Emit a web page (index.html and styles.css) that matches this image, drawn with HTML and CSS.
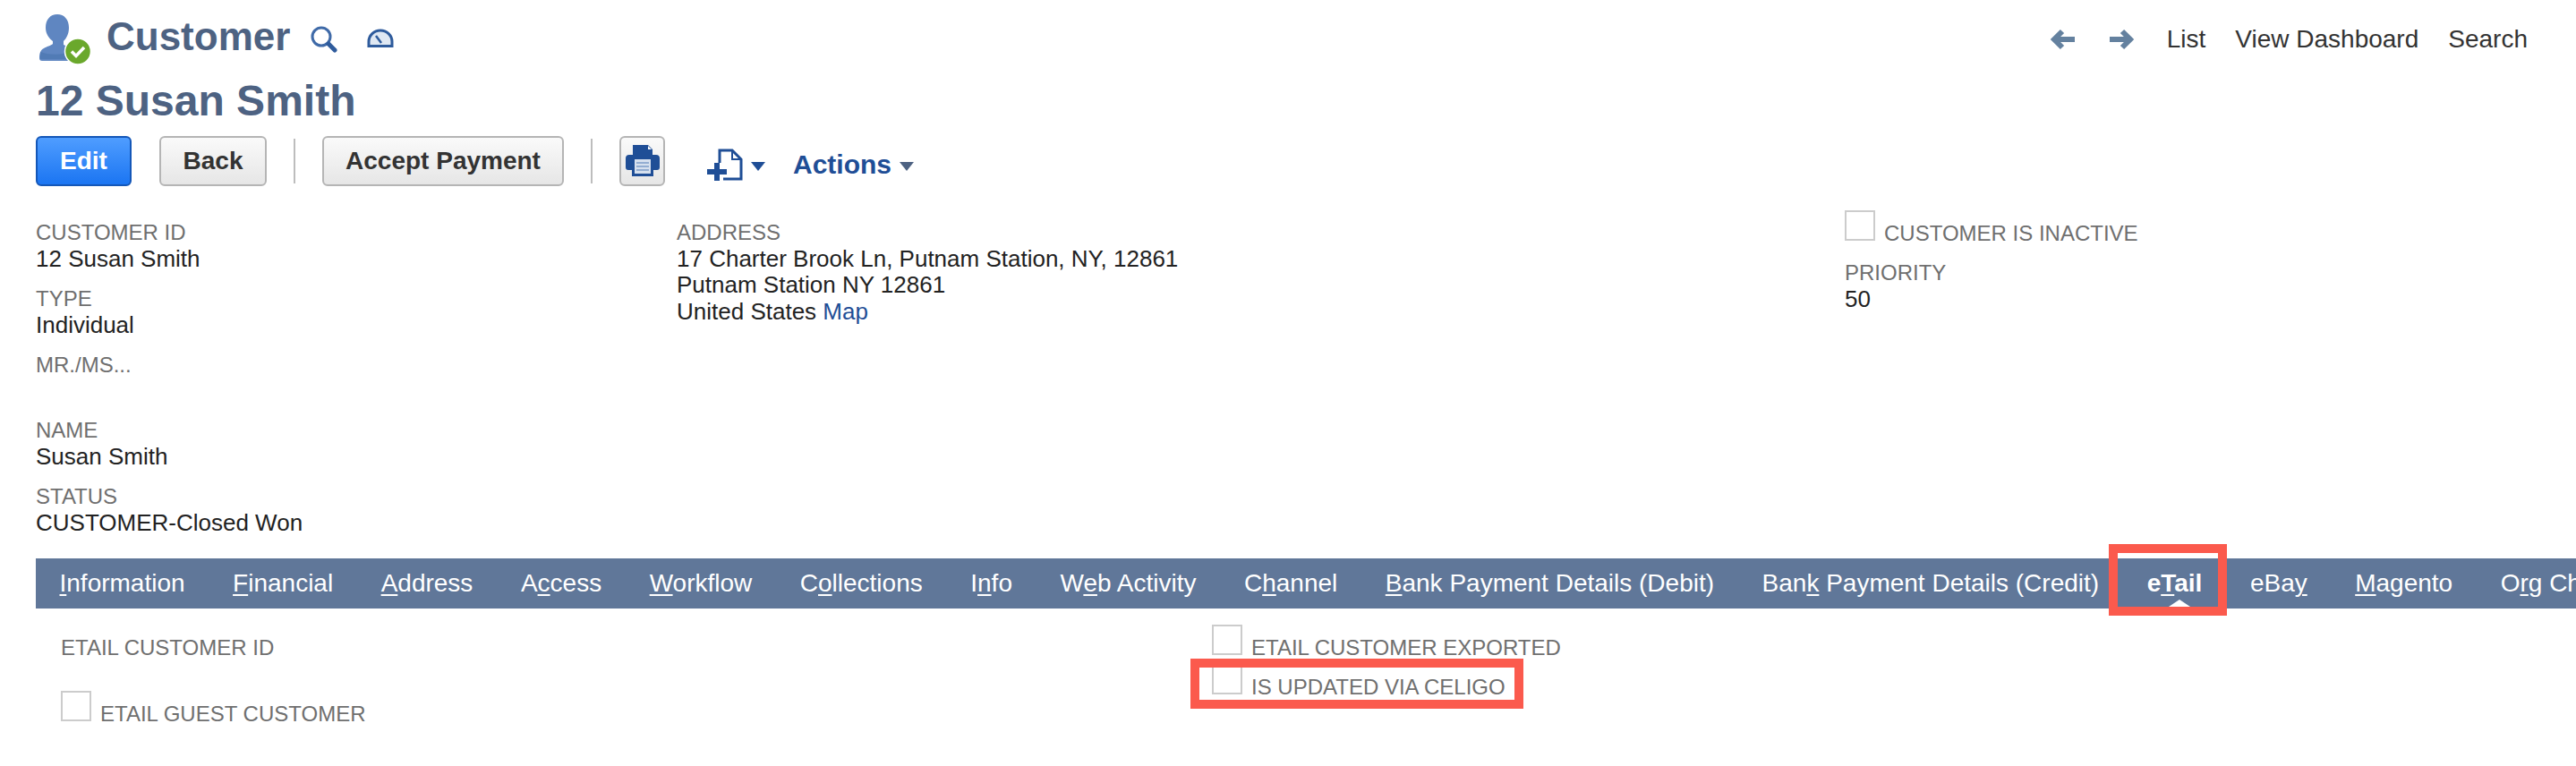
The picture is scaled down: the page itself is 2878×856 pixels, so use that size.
FILE: index.html
```html
<!DOCTYPE html>
<html lang="en">
<head>
<meta charset="utf-8">
<title>Customer - 12 Susan Smith</title>
<link rel="stylesheet" href="styles.css">
</head>
<body>
<div class="page">
  <header class="top">
    <div class="top-left">
      <svg class="person" viewBox="0 0 60 60" width="60" height="60" aria-hidden="true">
        <path d="M23 4c8 0 13 6 13 15 0 7-3 12-6 15v4c3 2 8 3 12 5 3 2 3 6 3 10v3H6c-2 0-3-1-3-3 0-5 1-9 5-11 3-2 8-3 10-5v-3c-4-3-8-8-8-15C10 10 15 4 23 4z" fill="#5f86c1"/>
        <path d="M4 46c8 3 24 5 38-2l3 10H4z" fill="#517bb5"/>
        <circle cx="46" cy="45.500" r="14.500" fill="#6aa82c" stroke="#fff" stroke-width="1.500"/>
        <path d="M39 45.500l5 5 9-9.500" fill="none" stroke="#fff" stroke-width="3.500"/>
      </svg>
      <span class="rec-type">Customer</span>
      <svg class="ico-search" viewBox="0 0 30 30" width="30" height="30" aria-hidden="true">
        <circle cx="12" cy="12" r="10" fill="none" stroke="#3f6aa8" stroke-width="3"/>
        <path d="M20 20l7 7" stroke="#2e5b9c" stroke-width="5" stroke-linecap="round"/>
      </svg>
      <svg class="ico-dash" viewBox="0 0 30 22" width="30" height="22" aria-hidden="true">
        <path d="M2 19.500v-5C2 7.500 8 2 15 2s13 5.500 13 12.500v5z" fill="#dfe8f3" stroke="#2e5b9c" stroke-width="3"/>
        <path d="M10 8l6 8" stroke="#2e5b9c" stroke-width="2.500"/>
      </svg>
    </div>
    <nav class="top-right">
      <svg class="arrow" viewBox="0 0 30 24" width="30" height="24" aria-hidden="true"><path d="M28 12H6M14 3l-9 9 9 9" fill="none" stroke="#64819f" stroke-width="6"/></svg>
      <svg class="arrow arrow-next" viewBox="0 0 30 24" width="30" height="24" aria-hidden="true"><path d="M2 12h22M16 3l9 9-9 9" fill="none" stroke="#64819f" stroke-width="6"/></svg>
      <a class="top-link top-link-list">List</a>
      <a class="top-link">View Dashboard</a>
      <a class="top-link">Search</a>
    </nav>
  </header>

  <h1 class="rec-name">12 Susan Smith</h1>

  <div class="actions">
    <button class="btn btn-primary">Edit</button>
    <button class="btn btn-back">Back</button>
    <span class="sep"></span>
    <button class="btn btn-accept">Accept Payment</button>
    <span class="sep"></span>
    <button class="btn btn-print" aria-label="Print">
      <svg viewBox="0 0 40 38" width="40" height="38" aria-hidden="true">
        <path d="M9 2h17l5 5v9H9z" fill="#1f4e96"/>
        <path d="M26 3l4 4h-4z" fill="#fff"/>
        <path d="M5 13h30a4 4 0 0 1 4 4v10a3 3 0 0 1-3 3h-4v7H8v-7H4a3 3 0 0 1-3-3V17a4 4 0 0 1 4-4z" fill="#1f4e96"/>
        <rect x="11" y="18" width="18" height="16" fill="#d6e0ee"/>
        <path d="M13 22h14M13 26h14M13 30h14" stroke="#7d9cc8" stroke-width="1.600"/>
      </svg>
    </button>
    <svg class="new-doc" viewBox="0 0 40 36" width="40" height="36" aria-hidden="true">
      <path d="M14 16V2h14l10 10v22H18" fill="none" stroke="#1f4e96" stroke-width="3"/>
      <path d="M28 2v10h10" fill="none" stroke="#1f4e96" stroke-width="2"/>
      <path d="M0 26h22M11 16v20" stroke="#1f4e96" stroke-width="6"/>
    </svg>
    <span class="caret caret-blue"></span>
    <a class="actions-menu">Actions</a>
    <span class="caret caret-slate"></span>
  </div>

  <section class="fields">
    <div class="col col-a">
      <div class="field"><div class="lbl">CUSTOMER ID</div><div class="val">12 Susan Smith</div></div>
      <div class="field"><div class="lbl">TYPE</div><div class="val">Individual</div></div>
      <div class="field field-empty"><div class="lbl">MR./MS...</div></div>
      <div class="field"><div class="lbl">NAME</div><div class="val">Susan Smith</div></div>
      <div class="field"><div class="lbl">STATUS</div><div class="val">CUSTOMER-Closed Won</div></div>
    </div>
    <div class="col col-b">
      <div class="lbl">ADDRESS</div>
      <div class="val">17 Charter Brook Ln, Putnam Station, NY, 12861</div>
      <div class="val">Putnam Station NY 12861</div>
      <div class="val">United States <a class="map">Map</a></div>
    </div>
    <div class="col col-c">
      <div class="check-row"><span class="box"></span><span class="lbl">CUSTOMER IS INACTIVE</span></div>
      <div class="field field-priority"><div class="lbl">PRIORITY</div><div class="val">50</div></div>
    </div>
  </section>

  <div class="tabs">
    <a class="tab"><u>I</u>nformation</a>
    <a class="tab"><u>F</u>inancial</a>
    <a class="tab"><u>A</u>ddress</a>
    <a class="tab">A<u>c</u>cess</a>
    <a class="tab"><u>W</u>orkflow</a>
    <a class="tab">C<u>o</u>llections</a>
    <a class="tab">I<u>n</u>fo</a>
    <a class="tab">W<u>e</u>b Activity</a>
    <a class="tab">C<u>h</u>annel</a>
    <a class="tab"><u>B</u>ank Payment Details (Debit)</a>
    <a class="tab">Ban<u>k</u> Payment Details (Credit)</a>
    <a class="tab tab-active">e<u>T</u>ail</a>
    <a class="tab">eBa<u>y</u></a>
    <a class="tab"><u>M</u>agento</a>
    <a class="tab">O<u>r</u>g Chart</a>
  </div>

  <section class="panel">
    <div class="panel-col">
      <div class="lbl panel-id">ETAIL CUSTOMER ID</div>
      <div class="check-row panel-guest"><span class="box"></span><span class="lbl">ETAIL GUEST CUSTOMER</span></div>
    </div>
    <div class="panel-col">
      <div class="check-row"><span class="box"></span><span class="lbl">ETAIL CUSTOMER EXPORTED</span></div>
      <div class="check-row panel-celigo"><span class="box"></span><span class="lbl">IS UPDATED VIA CELIGO</span></div>
    </div>
  </section>
</div>
<div class="mark mark-tab"></div>
<div class="mark mark-field"></div>
</body>
</html>
```
FILE: styles.css
```css
* { box-sizing: border-box; }
html, body { margin: 0; padding: 0; background: #fff; }
body {
  position: relative;
  width: 2878px;
  height: 856px;
  overflow: hidden;
  font-family: "Liberation Sans", Arial, sans-serif;
}
.page { padding-left: 40px; }
.top {
  display: flex;
  justify-content: space-between;
  height: 88px;
  padding-top: 12px;
}
.top-left { display: flex; align-items: flex-start; }
.person { margin-left: 1px; }
.rec-type {
  margin-left: 18px;
  font-size: 44px;
  line-height: 58px;
  font-weight: 700;
  color: #4d6282;
}
.ico-search { margin: 17px 0 0 23px; }
.ico-dash { margin: 20px 0 0 33px; }
.top-right {
  display: flex;
  align-items: center;
  height: 64px;
  padding-right: 54px;
}
.arrow { display: block; }
.arrow-next { margin-left: 35px; }
.top-link { font-size: 28px; color: #333; margin-left: 33px; }
.top-link-list { margin-left: 36px; }
.rec-name {
  margin: 0;
  height: 60px;
  font-size: 48px;
  line-height: 49px;
  font-weight: 700;
  color: #4d6282;
}
.actions { display: flex; align-items: center; height: 56px; margin-top: 4px; }
.btn {
  height: 56px;
  padding: 0;
  border-radius: 6px;
  border: 2px solid #b5b5b5;
  background: linear-gradient(#fafafa, #e6e6e6);
  font-family: inherit;
  font-size: 28px;
  font-weight: 700;
  color: #333;
}
.btn-primary {
  width: 107px;
  border-color: #1457b8;
  background: linear-gradient(#4f9dff, #1b75f2);
  color: #fff;
}
.btn-back { width: 120px; margin-left: 31px; }
.btn-accept { width: 270px; }
.btn-print {
  width: 51px;
  display: flex;
  align-items: flex-start;
  justify-content: center;
  padding-top: 6px;
}
.sep {
  width: 2px;
  height: 50px;
  background: #bdbdbd;
  margin: 0 30px;
}
.new-doc { margin: 8px 0 0 47px; }
.caret {
  width: 0;
  height: 0;
  border-left: 8px solid transparent;
  border-right: 8px solid transparent;
  border-top: 10px solid #1f4e96;
  margin-left: 9px;
  margin-top: 12px;
}
.caret-slate { border-top-color: #4d6282; }
.actions-menu {
  margin: 8px 0 0 31px;
  font-size: 30px;
  font-weight: 700;
  color: #1f4e96;
}
.fields {
  display: grid;
  grid-template-columns: 716px 1305px 1fr;
  height: 379px;
  margin-top: 37px;
}
.lbl { font-size: 24px; line-height: 29.5px; color: #6f6f6f; white-space: nowrap; }
.val { font-size: 26px; line-height: 29.5px; color: #222; white-space: nowrap; }
.field { margin-bottom: 15px; }
.field-empty { height: 58px; }
.check-row { display: flex; align-items: flex-end; }
.box {
  display: block;
  flex: none;
  width: 34px;
  height: 34px;
  border: 2px solid #ccc;
  background: #fff;
  margin-right: 10px;
}
.check-row .lbl { line-height: 26px; margin-bottom: -5px; }
.col-c { margin-top: -10px; }
.field-priority { margin-top: 21px; }
.map { color: #1f4e96; }
.tabs {
  display: flex;
  gap: 53.5px;
  height: 56px;
  padding-left: 26.5px;
  background: #607799;
  overflow: hidden;
  white-space: nowrap;
}
.tab {
  position: relative;
  flex: none;
  font-size: 28px;
  line-height: 56px;
  color: #fff;
}
.tab u { text-underline-offset: 3px; text-decoration-thickness: 2px; }
.tab-active { font-weight: 700; }
.tab-active::after {
  content: "";
  position: absolute;
  left: 50%;
  bottom: 0;
  margin-left: -10px;
  border-left: 15px solid transparent;
  border-right: 15px solid transparent;
  border-bottom: 10px solid #fff;
}
.panel {
  display: grid;
  grid-template-columns: 1286px 1fr;
  padding: 18px 0 0 28px;
}
.panel-id { margin-top: 11px; }
.panel-guest { margin-top: 33px; }
.panel-celigo { margin-top: 10px; }
.mark {
  position: absolute;
  border: 10px solid #fb5a4d;
}
.mark-tab { left: 2356px; top: 608px; width: 132px; height: 80px; }
.mark-field { left: 1330px; top: 736px; width: 372px; height: 56px; }
```
